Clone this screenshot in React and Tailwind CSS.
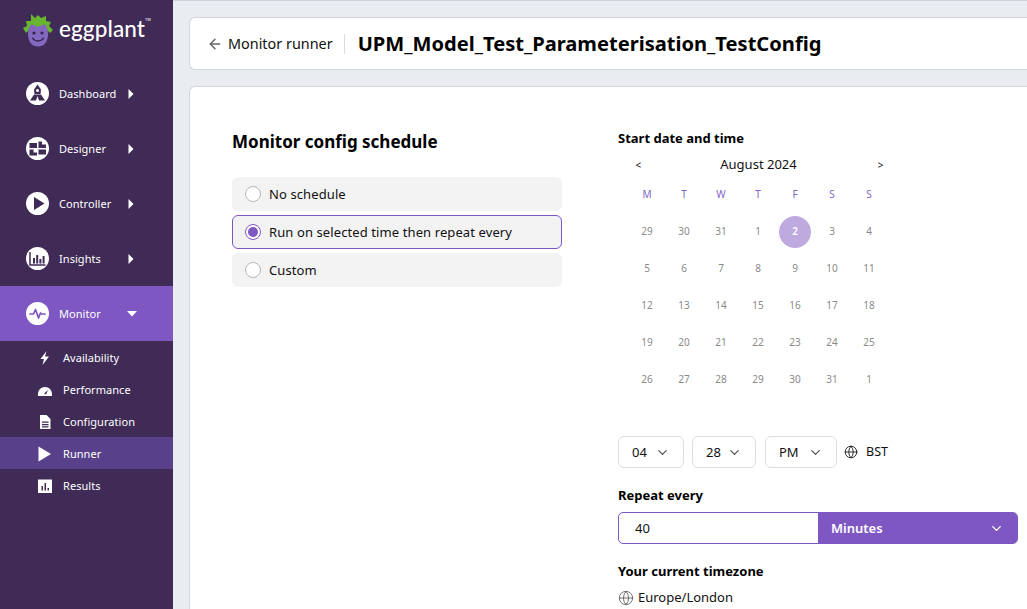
import React from "react";
import { ArrowLeft, ChevronDown, Globe } from "lucide-react";

function Logo() {
  return (
    <svg width="32" height="34" viewBox="0 0 32 34">
      <path d="M1 15 L5 13 L4 8 L9 8 L9 1 L13 5 L16 2 L19 5 L24 3 L24 8 L29 9 L27 13 L31 17 L28 20 L25 17 L7 17 L4 20 Z" fill="#68b52f" />
      <path d="M16 9 C22 9 26 13 26 21 C26 29 22 33.5 16 33.5 C10 33.5 6 29 6 21 C6 13 10 9 16 9 Z" fill="#8468c0" />
      <path d="M9 11 L16 14 L23 11 L19 8 H13 Z" fill="#68b52f" />
      <circle cx="12" cy="20" r="1.6" fill="#33234a" />
      <circle cx="20" cy="20" r="1.6" fill="#33234a" />
      <path d="M10.5 25 C13 29 19 29 21.5 25" fill="none" stroke="#33234a" strokeWidth="1.4" strokeLinecap="round" />
    </svg>
  );
}

function NavIcon({ children }) {
  return (
    <span className="flex h-[23px] w-[23px] shrink-0 items-center justify-center rounded-full bg-white">
      <svg width="23" height="23" viewBox="0 0 23 23">{children}</svg>
    </span>
  );
}

const dashboardIcon = (
  <>
    <path d="M11.5 2.5 L15 7.5 L14.5 12 H8.5 L8 7.5 Z" fill="#3f2b56" />
    <circle cx="11.5" cy="8.5" r="1.5" fill="#fff" />
    <path d="M8 12.5 L4 18.5 H10 L11.5 14 L13 18.5 H19 L15 12.5 Z" fill="#3f2b56" />
  </>
);

const designerIcon = (
  <>
    <path d="M3.5 6 h7.5 v5 h-7.5 z M12.5 4.5 h3.5 v3 h4 v3.5 h-7.5 z M3.5 12.5 h4 v3 h3.5 v3 h-7.5 z M12.5 12.5 h7.5 v5 h-7.5 z" fill="#3f2b56" />
  </>
);

const controllerIcon = (
  <path d="M8 5 L18.5 11.5 L8 18 Z" fill="#3f2b56" />
);

const insightsIcon = (
  <>
    <path d="M4 5 V18 H19.5" fill="none" stroke="#3f2b56" strokeWidth="1.5" />
    <path d="M7 11 h2 v5.5 h-2 z M10.2 8 h2 v8.5 h-2 z M13.4 12 h2 v4.5 h-2 z M16.6 9 h2 v7.5 h-2 z" fill="#3f2b56" />
  </>
);

const monitorIcon = (
  <path d="M4 12 H7.5 L9.5 7.5 L12.5 16 L14.5 11 L15.5 12 H19" fill="none" stroke="#7e57c2" strokeWidth="1.7" strokeLinejoin="round" strokeLinecap="round" />
);

const navItems = [
  { label: "Dashboard", icon: dashboardIcon },
  { label: "Designer", icon: designerIcon },
  { label: "Controller", icon: controllerIcon },
  { label: "Insights", icon: insightsIcon },
];

const subItems = [
  {
    label: "Availability",
    icon: <path d="M9.5 1 L3.5 9 H7 L5.5 15 L12 6.5 H8 Z" fill="#fff" />,
  },
  {
    label: "Performance",
    icon: <path d="M1 14 C0.5 8 4 5 8 5 C12 5 15.5 8 15 14 Z M7 11.5 L11 8 L9 12.5 Z" fill="#fff" fillRule="evenodd" />,
  },
  {
    label: "Configuration",
    icon: <path d="M3 1 H9.5 L13.5 5 V15 H3 Z M5 7.5 V8.7 H11.5 V7.5 Z M5 10 V11.2 H11.5 V10 Z M5 12.3 V13.4 H11.5 V12.3 Z" fill="#fff" fillRule="evenodd" />,
  },
  { label: "Runner", active: true, icon: <path d="M1.5 0.5 L14 8 L1.5 15.5 Z" fill="#fff" /> },
  {
    label: "Results",
    icon: <path d="M1 1.5 H15 V15 H1 Z M4.5 8 V12.5 H6 V8 Z M7.5 5 V12.5 H9 V5 Z M10.5 10 V12.5 H12 V10 Z" fill="#fff" fillRule="evenodd" />,
  },
];

function Caret({ down }) {
  return down ? (
    <svg width="10" height="6" viewBox="0 0 10 6"><path d="M0 0 H10 L5 5.5 Z" fill="#fff" /></svg>
  ) : (
    <svg width="6" height="10" viewBox="0 0 6 10"><path d="M0.5 0 L5.5 5 L0.5 10 Z" fill="#fff" /></svg>
  );
}

function Sidebar() {
  return (
    <div className="w-[173px] shrink-0 bg-[#3f2b56] text-[11px] tracking-[0.05px] text-white">
      <div className="flex h-[66px] items-start pl-[22px] pt-[13px]">
        <Logo />
        <span className="ml-[5px] mt-[2px] font-['Lato',sans-serif] text-[22.5px] leading-[28px] font-medium tracking-[0.1px]">eggplant</span>
        <span className="mt-[4px] text-[4px] leading-[6px]">TM</span>
      </div>
      {navItems.map((item) => (
        <div key={item.label} className="flex h-[55px] items-center pl-[26px]">
          <NavIcon>{item.icon}</NavIcon>
          <span className="ml-[10px] w-[69px] pt-[2px]">{item.label}</span>
          <Caret />
        </div>
      ))}
      <div className="flex h-[55px] items-center bg-[#7e57c2] pl-[26px]">
        <NavIcon>{monitorIcon}</NavIcon>
        <span className="ml-[10px] w-[68px] pt-[2px]">Monitor</span>
        <Caret down />
      </div>
      {subItems.map((item) => (
        <div key={item.label} className={`flex h-[32px] items-center pl-[37px] pt-[2px] ${item.active ? "bg-[#58418a]" : ""}`}>
          <svg width="16" height="16" viewBox="0 0 16 16">{item.icon}</svg>
          <span className="ml-[10px]">{item.label}</span>
        </div>
      ))}
    </div>
  );
}

const radios = [
  { label: "No schedule" },
  { label: "Run on selected time then repeat every", selected: true },
  { label: "Custom" },
];

function ScheduleOptions() {
  return (
    <div className="w-[330px] shrink-0 pt-[43px]">
      <h2 className="text-[17px] leading-[24px] font-bold text-black">Monitor config schedule</h2>
      <div className="mt-[23px] flex flex-col gap-[4px]">
        {radios.map((r) => (
          <div
            key={r.label}
            className={`flex h-[34px] items-center rounded-[6px] bg-[#f3f3f4] text-[13px] tracking-[0.1px] text-[#111] ${r.selected ? "border border-[#7e57c2] pl-[12px]" : "pl-[13px]"}`}
          >
            {r.selected ? (
              <span className="flex h-4 w-4 items-center justify-center rounded-full border border-[#7e57c2] bg-white">
                <span className="h-[10px] w-[10px] rounded-full bg-[#7e57c2]" />
              </span>
            ) : (
              <span className="h-4 w-4 rounded-full border border-[#b5b5b5] bg-white" />
            )}
            <span className="ml-[8px] pt-[2px]">{r.label}</span>
          </div>
        ))}
      </div>
    </div>
  );
}

const weekDays = ["M", "T", "W", "T", "F", "S", "S"];
const days = [
  29, 30, 31, 1, 2, 3, 4,
  5, 6, 7, 8, 9, 10, 11,
  12, 13, 14, 15, 16, 17, 18,
  19, 20, 21, 22, 23, 24, 25,
  26, 27, 28, 29, 30, 31, 1,
];

function Calendar() {
  return (
    <div className="ml-[10.5px] w-[259px]">
      <div className="mt-[7px] flex h-[22px] items-center justify-between pl-[7px] pr-[4px] text-[13px] text-[#111]">
        <span className="text-[10px]">&lt;</span>
        <span className="pr-[2px]">August 2024</span>
        <span className="text-[10px]">&gt;</span>
      </div>
      <div className="mt-[7px] grid grid-cols-7">
        {weekDays.map((d, i) => (
          <div key={i} className="flex h-[23px] items-center justify-center text-[10px] text-[#7e66c8]">{d}</div>
        ))}
      </div>
      <div className="mt-[7px] grid grid-cols-7">
        {days.map((d, i) => (
          <div key={i} className="flex h-[37px] items-center justify-center text-[10px] text-[#8a8a8a]">
            {i === 4 ? (
              <span className="flex h-8 w-8 items-center justify-center rounded-full bg-[#bfaadf] font-semibold text-white">{d}</span>
            ) : d}
          </div>
        ))}
      </div>
    </div>
  );
}

function TimeSelect({ value, width }) {
  return (
    <div className={`flex h-[32px] items-center justify-between rounded-[6px] border border-[#dedede] pl-[13px] pr-[13px] text-[13px] text-[#111] ${width}`}>
      <span className="pt-[2px]">{value}</span>
      <ChevronDown size={15} strokeWidth={2} className="text-[#555]" />
    </div>
  );
}

function StartPanel() {
  return (
    <div className="ml-[56px] w-[400px] shrink-0 pt-[42px]">
      <div className="text-[13px] leading-[18px] font-bold text-black">Start date and time</div>
      <Calendar />
      <div className="mt-[38px] flex items-center">
        <TimeSelect value="04" width="w-[66px]" />
        <div className="ml-[8px]"><TimeSelect value="28" width="w-[64px]" /></div>
        <div className="ml-[9px]"><TimeSelect value="PM" width="w-[72px]" /></div>
        <Globe size={14} strokeWidth={1.6} className="ml-[7px] text-[#222]" />
        <span className="ml-[8px] pt-[1px] text-[12.5px] text-[#111]">BST</span>
      </div>
      <div className="mt-[18px] text-[13px] leading-[18px] font-bold text-black">Repeat every</div>
      <div className="mt-[8px] flex h-[32px] overflow-hidden rounded-[5px] border border-[#7e57c2] text-[13px]">
        <div className="flex w-[199px] items-center pl-[16px] pt-[2px] text-[#111]">40</div>
        <div className="flex flex-1 items-center justify-between bg-[#7e57c2] pl-[13px] pr-[13px] font-semibold text-white">
          <span className="pt-[2px]">Minutes</span>
          <ChevronDown size={15} strokeWidth={2.2} />
        </div>
      </div>
      <div className="mt-[18px] text-[13px] leading-[18px] font-bold text-black">Your current timezone</div>
      <div className="mt-[8px] flex items-center text-[13px] text-[#111]">
        <Globe size={16} strokeWidth={1.4} className="text-[#666]" />
        <span className="ml-[4px]">Europe/London</span>
      </div>
    </div>
  );
}

export default function App() {
  return (
    <div className="flex h-[609px] w-[1027px] overflow-hidden bg-white font-['Noto_Sans',sans-serif]">
      <Sidebar />
      <div className="min-w-0 flex-1 border-t border-[#cfd2d8] bg-[#e9ecf1] pl-4 pt-4">
        <div className="flex h-[53px] items-center rounded-l-[6px] border border-r-0 border-[#d3d5da] bg-white pl-[17px]">
          <ArrowLeft size={16} strokeWidth={2.2} className="text-[#666]" />
          <span className="ml-[5px] text-[14.4px] text-[#111]">Monitor runner</span>
          <span className="ml-[11px] h-[20px] w-px bg-[#dcdcdc]" />
          <h1 className="ml-[13px] pt-[2px] text-[20.1px] font-bold text-black">UPM_Model_Test_Parameterisation_TestConfig</h1>
        </div>
        <div className="mt-[16px] flex h-[560px] rounded-tl-[6px] border-t border-l border-[#d3d5da] bg-white pl-[42px]">
          <ScheduleOptions />
          <StartPanel />
        </div>
      </div>
    </div>
  );
}
